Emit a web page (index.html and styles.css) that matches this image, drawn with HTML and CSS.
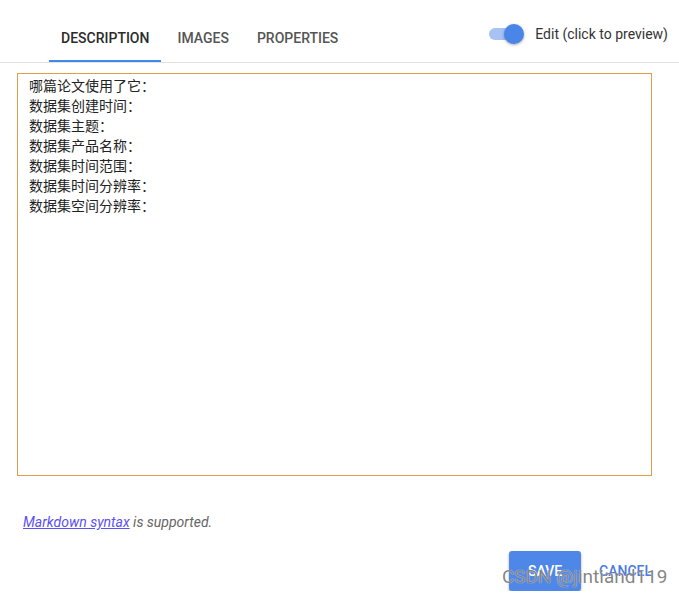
FILE: index.html
```html
<!DOCTYPE html>
<html lang="zh-CN">
<head>
  <meta charset="UTF-8">
  <meta name="viewport" content="width=device-width, initial-scale=1.0">
  <title>Edit dataset description</title>
  <link rel="stylesheet" href="styles.css">
</head>
<body>
  <div class="editor">
    <div class="header">
      <div class="tabs">
        <div class="tab active">DESCRIPTION</div>
        <div class="tab">IMAGES</div>
        <div class="tab">PROPERTIES</div>
      </div>
      <label class="toggle">
        <span class="switch"><span class="track"></span><span class="thumb"></span></span>
        <span class="toggle-label">Edit (click to preview)</span>
      </label>
    </div>

    <textarea class="desc-input">哪篇论文使用了它：
数据集创建时间：
数据集主题：
数据集产品名称：
数据集时间范围：
数据集时间分辨率：
数据集空间分辨率：</textarea>

    <p class="hint"><a href="#">Markdown syntax</a> is supported.</p>

    <div class="actions">
      <button class="btn save">SAVE</button>
      <button class="btn cancel">CANCEL</button>
    </div>
  </div>

  <div class="watermark">CSDN @jintiand119</div>
</body>
</html>
```

FILE: styles.css
```css
body {
  margin: 0;
  font-family: Roboto, "Noto Sans", Arial, sans-serif;
  background: #ffffff;
  color: #333333;
}
.editor {
  width: 679px;
}
.header {
  display: flex;
  justify-content: space-between;
  align-items: flex-start;
  height: 62px;
  border-bottom: 1px solid #e2e2e2;
  padding-left: 49px;
  padding-right: 11px;
}
.tabs {
  display: flex;
  gap: 4px;
}
.tab {
  box-sizing: border-box;
  height: 62px;
  padding: 29px 12px 0;
  font-size: 14px;
  font-weight: 500;
  line-height: 18px;
  color: #555555;
  border-bottom: 2px solid transparent;
}
.tab.active {
  color: #2b2b2b;
  border-bottom-color: #3f8ae6;
}
.toggle {
  display: flex;
  align-items: center;
  margin-top: 24px;
  gap: 11px;
}
.switch {
  position: relative;
  width: 35px;
  height: 20px;
}
.track {
  position: absolute;
  left: 0;
  top: 4px;
  width: 28px;
  height: 12px;
  border-radius: 6px;
  background: #a6c3f4;
}
.thumb {
  position: absolute;
  left: 15px;
  top: 0;
  width: 20px;
  height: 20px;
  border-radius: 50%;
  background: #4a86e8;
  box-shadow: 0 1px 3px rgba(0, 0, 0, 0.35);
}
.toggle-label {
  font-size: 14px;
  color: #333333;
}
.desc-input {
  display: block;
  box-sizing: border-box;
  width: 635px;
  height: 403px;
  margin: 10px 0 0 17px;
  padding: 1px 11px;
  border: 1px solid #e39d48;
  border-radius: 0;
  outline: none;
  resize: none;
  font-family: "Noto Sans CJK SC", sans-serif;
  font-size: 14px;
  line-height: 20px;
  color: #222222;
}
.hint {
  margin: 38px 0 0 23px;
  font-size: 14px;
  font-style: italic;
  color: #666666;
}
.hint a {
  color: #5b50f2;
}
.actions {
  display: flex;
  justify-content: flex-end;
  gap: 6px;
  margin-top: 21px;
  padding-right: 15px;
}
.btn {
  height: 40px;
  padding: 0 12px;
  border: none;
  border-radius: 3px;
  font-family: Roboto, sans-serif;
  font-size: 14px;
  font-weight: 500;
  cursor: pointer;
}
.save {
  width: 72px;
  background: #4f87e8;
  color: #ffffff;
  box-shadow: 0 2px 3px rgba(0, 0, 0, 0.3);
}
.cancel {
  background: transparent;
  color: #4a7be4;
}
.watermark {
  position: absolute;
  left: 502px;
  top: 565px;
  font-family: Roboto, sans-serif;
  font-size: 19px;
  color: rgba(110, 110, 110, 0.85);
  text-shadow: 0 0 1px #ffffff;
}
```
